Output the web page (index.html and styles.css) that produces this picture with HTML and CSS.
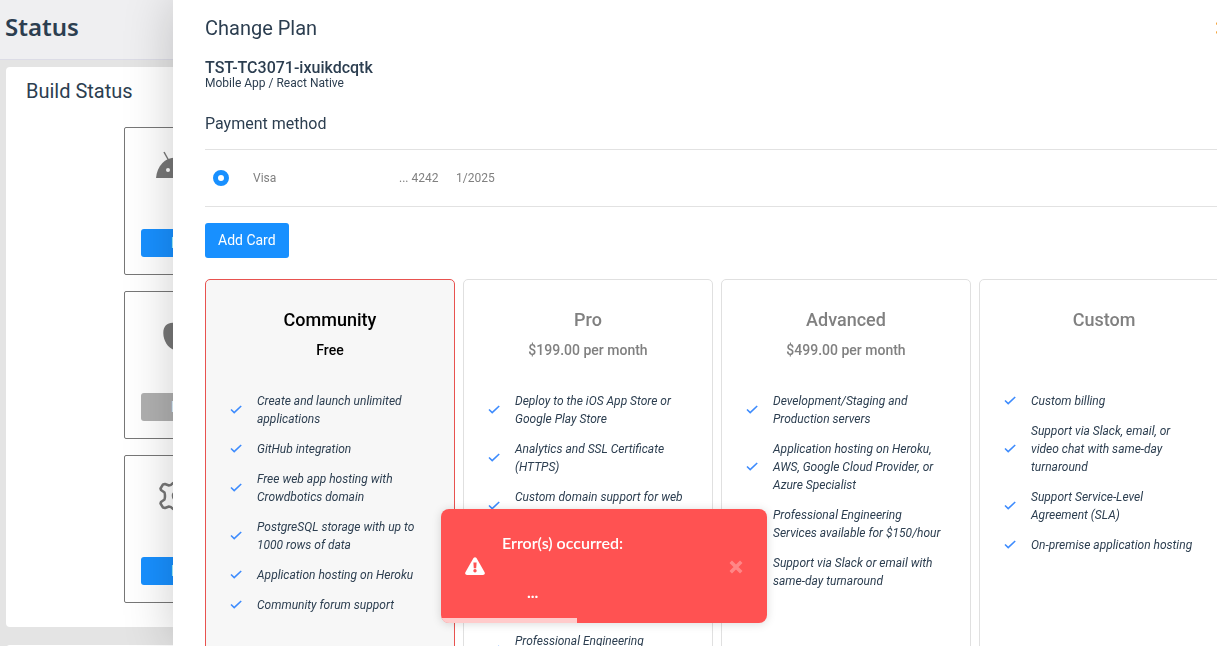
FILE: index.html
```html
<!DOCTYPE html>
<html lang="en">
<head>
<meta charset="utf-8">
<title>Status</title>
<link rel="stylesheet" href="styles.css">
</head>
<body>
<svg class="defs" aria-hidden="true">
  <symbol id="check" viewBox="0 0 12 12"><path d="M1 5.500 4.200 8.600 11.200 2" fill="none" stroke="#3d8bfd" stroke-width="1.600"/></symbol>
</svg>
<header class="page-header"><h1>Status</h1></header>
<main class="page">
  <section class="panel">
    <h2>Build Status</h2>
    <div class="builds">
      <article class="build">
        <svg class="build-icon" viewBox="0 0 40 40"><path d="M2 29C3 17 11 8.500 21.500 8.500S40 17 41 29Z" fill="#777"/><path d="m10 3 5 9" stroke="#777" stroke-width="1.500"/><circle cx="14" cy="21" r="2" fill="#fff"/><circle cx="29" cy="21" r="2" fill="#fff"/></svg>
        <button class="build-btn">Build</button>
      </article>
      <article class="build">
        <svg class="build-icon" viewBox="0 0 40 40"><path d="M9.300 20c0-7 4-10.300 9.200-10.300 2.500 0 3.500 1.300 5.500 1.300s4-1 7-1c3 0 5 2 6 4-5 4-5 10 1 14-3 7-6 9-8 9-3 0-4-1-6-1s-3 .6-5 .4C14.500 35 9.300 28 9.300 20Z" fill="#777"/></svg>
        <button class="build-btn muted">Build</button>
      </article>
      <article class="build">
        <svg class="build-icon" viewBox="0 0 40 40" fill="none" stroke="#777" stroke-width="2.500" stroke-linejoin="round"><path d="M19 6q-2 2.500-4 2.500L11 7 9 7.500 6.500 11.500 7 13l3.500 2.500q1 3.500 0 7L7 25l-.5 1.500L9 30.500l2 .5 4-1.500q2 0 4 2.500h6q2-2.500 4-2.500l4 1.500 2-.5 2.500-4L37 25l-3.500-2.500q-1-3.500 0-7L37 13l.5-1.500L35 7.500 33 7l-4 1.500Q27 8.500 25 6Z"/><circle cx="24" cy="19" r="5"/></svg>
        <button class="build-btn">Build</button>
      </article>
    </div>
  </section>
  <section class="panel next"></section>
</main>

<aside class="drawer">
  <header class="drawer-head">
    <h2>Change Plan</h2>
    <button class="drawer-close" aria-label="Close"><svg viewBox="0 0 13 12"><path d="m0 1 12 10M0 11 12 1" stroke="#f5a742" stroke-width="2"/></svg></button>
  </header>
  <h3 class="app-name">TST-TC3071-ixuikdcqtk</h3>
  <p class="app-type">Mobile App / React Native</p>
  <h4 class="pay-title">Payment method</h4>
  <table class="cards">
    <tbody><tr>
      <td class="pick"><input type="radio" name="card" id="visa" checked></td>
      <td class="brand"><label for="visa">Visa</label></td>
      <td class="digits">... 4242</td>
      <td>1/2025</td>
    </tr></tbody>
  </table>
  <button class="add-card">Add Card</button>
  <div class="plans">
    <article class="plan current">
      <h3>Community</h3><p class="price">Free</p>
      <ul>
        <li><svg><use href="#check"/></svg><span>Create and launch unlimited applications</span></li>
        <li><svg><use href="#check"/></svg><span>GitHub integration</span></li>
        <li><svg><use href="#check"/></svg><span>Free web app hosting with Crowdbotics domain</span></li>
        <li><svg><use href="#check"/></svg><span>PostgreSQL storage with up to 1000 rows of data</span></li>
        <li><svg><use href="#check"/></svg><span>Application hosting on Heroku</span></li>
        <li><svg><use href="#check"/></svg><span>Community forum support</span></li>
      </ul>
    </article>
    <article class="plan">
      <h3>Pro</h3><p class="price">$199.00 per month</p>
      <ul>
        <li><svg><use href="#check"/></svg><span>Deploy to the iOS App Store or Google Play Store</span></li>
        <li><svg><use href="#check"/></svg><span>Analytics and SSL Certificate (HTTPS)</span></li>
        <li class="tall"><svg><use href="#check"/></svg><span>Custom domain support for web</span></li>
        <li class="tall"></li>
        <li class="tall"></li>
        <li class="tall"><svg><use href="#check"/></svg><span>Professional Engineering</span></li>
      </ul>
    </article>
    <article class="plan">
      <h3>Advanced</h3><p class="price">$499.00 per month</p>
      <ul>
        <li><svg><use href="#check"/></svg><span>Development/Staging and Production servers</span></li>
        <li><svg><use href="#check"/></svg><span>Application hosting on Heroku, AWS, Google Cloud Provider, or Azure Specialist</span></li>
        <li><svg><use href="#check"/></svg><span>Professional Engineering Services available for $150/hour</span></li>
        <li><svg><use href="#check"/></svg><span>Support via Slack or email with same-day turnaround</span></li>
      </ul>
    </article>
    <article class="plan">
      <h3>Custom</h3><p class="price"></p>
      <ul>
        <li><svg><use href="#check"/></svg><span>Custom billing</span></li>
        <li><svg><use href="#check"/></svg><span>Support via Slack, email, or video chat with same-day turnaround</span></li>
        <li><svg><use href="#check"/></svg><span>Support Service-Level Agreement (SLA)</span></li>
        <li><svg><use href="#check"/></svg><span>On-premise application hosting</span></li>
      </ul>
    </article>
  </div>
</aside>

<div class="toast" role="alert">
  <svg class="warn" viewBox="0 0 20 18"><path d="M8.500 1Q10-.6 11.500 1l8.100 14.200Q20.300 18 18 18H2Q-.3 18 .4 15.200Z" fill="#fff"/><path d="M8.400 5.500h3.200l-.4 5.700H8.800Z" fill="#ff5252"/><circle cx="10" cy="13.800" r="1.700" fill="#ff5252"/></svg>
  <div class="toast-body"><p>Error(s) occurred:</p><p class="detail">...</p></div>
  <button class="toast-close" aria-label="Dismiss"><svg viewBox="0 0 12 12"><path d="m1.500 1.500 9 9m0-9-9 9" stroke="#fff" stroke-width="3"/></svg></button>
  <div class="progress"></div>
</div>
</body>
</html>
```
FILE: styles.css
```css
* { box-sizing: border-box; }
html, body { height: 100%; }
body {
  display: flex;
  flex-direction: column;
  margin: 0;
  overflow: hidden;
  background: #e4e4e4;
  color: #2c3e50;
  font-family: Roboto, sans-serif;
}
h1, h2, h3, h4, p, ul { margin: 0; padding: 0; }
button { border: 0; padding: 0; cursor: pointer; font-family: inherit; }
svg { display: block; }
.defs { position: absolute; width: 0; height: 0; }

.page-header {
  flex: none;
  height: 60px;
  padding: 10px 5px;
  background: #efeff1;
  border-bottom: 1px solid #dcdce6;
}
.page-header h1 {
  font: 600 24px/34px "Noto Sans", sans-serif;
}
.page { flex: 1; min-height: 0; padding: 7px 6px 0; overflow: hidden; }
.panel {
  padding: 12px 20px 24px;
  background: #fff;
  border-radius: 4px;
}
.panel h2, .drawer-head h2 { font-size: 20px; font-weight: 400; line-height: 24px; }
.panel.next { margin-top: 18px; }
.builds { display: grid; gap: 16px; padding: 24px 98px 0; }
.build {
  display: flex;
  flex-direction: column;
  justify-content: space-between;
  height: 148px;
  padding: 21px 16px 17px;
  border: 1px solid #777;
  border-radius: 2px;
}
.build-icon { width: 40px; height: 40px; margin-left: 13px; }
.build-btn {
  height: 28px;
  padding-left: 30px;
  border-radius: 3px;
  background: #1890ff;
  color: #fff;
  font-size: 14px;
  text-align: left;
}
.build-btn.muted { background: #b0b0b0; }

.drawer {
  position: fixed;
  top: 0;
  bottom: 0;
  left: 173px;
  right: -44px;
  padding: 16px 32px 0;
  overflow: hidden;
  background: #fff;
  box-shadow: 0 0 48px rgba(0, 0, 0, .2);
}
.drawer-head { display: flex; justify-content: space-between; align-items: center; }
.drawer-close { background: none; }
.drawer-close svg { width: 13px; height: 12px; }
.app-name { margin-top: 18px; font-size: 16px; font-weight: 500; line-height: 19px; }
.app-type { font-size: 12px; line-height: 13px; }
.pay-title { margin-top: 24px; font-size: 16px; font-weight: 400; line-height: 20px; }
.cards {
  width: 100%;
  margin-top: 15px;
  border-top: 1px solid #e2e2e2;
  border-bottom: 1px solid #e2e2e2;
  border-collapse: separate;
  border-spacing: 0;
  color: #808080;
  font-size: 12px;
}
.cards td { height: 56px; padding: 0; }
.cards .pick { width: 48px; padding-left: 8px; }
.cards .brand { width: 146px; }
.cards .digits { width: 57px; }
.pick input {
  display: block;
  appearance: none;
  width: 16px;
  height: 16px;
  margin: 0;
  border: 5px solid #1890ff;
  border-radius: 50%;
  background: #fff;
}
.add-card {
  display: block;
  height: 35px;
  margin: 16px 0 21px;
  padding: 0 13px 1px;
  border-radius: 3px;
  background: #1890ff;
  color: #fff;
  font-size: 14px;
}
.plans { display: grid; grid-template-columns: repeat(4, 1fr); gap: 8px; }
.plan {
  min-height: 420px;
  padding: 28px 24px 24px;
  border: 1px solid #e0e0e0;
  border-radius: 5px;
}
.plan.current { background: #f7f7f7; border-color: #e8524f; }
.plan h3, .price { color: #808080; font-weight: 500; text-align: center; }
.plan h3 { font-size: 18px; line-height: 24px; }
.price { min-height: 20px; margin-top: 8px; font-size: 14px; line-height: 20px; }
.current h3, .current .price { color: #000; }
.plan ul { display: grid; gap: 12px; margin-top: 32px; padding-right: 4px; list-style: none; }
.plan li {
  display: flex;
  align-items: center;
  gap: 15px;
  font-size: 12px;
  font-style: italic;
  line-height: 18px;
}
.plan li svg { flex: none; width: 12px; height: 12px; }
.plan .tall { min-height: 36px; }
.plan .tall span { align-self: flex-start; }

.toast {
  position: fixed;
  bottom: 23px;
  left: 441px;
  display: flex;
  align-items: center;
  width: 326px;
  padding: 22px 24px 19px;
  overflow: hidden;
  border-radius: 8px;
  background: #ff5252;
  box-shadow: 0 1px 10px rgba(0, 0, 0, .15);
  color: #fff;
  font: 600 16px/24px Lato, sans-serif;
}
.warn { width: 20px; height: 18px; margin: 0 17px 4px 0; }
.toast-body { flex: 1; }
.detail { margin-top: 25px; padding-left: 25px; font-weight: 700; }
.toast-close { margin-bottom: 2px; background: none; opacity: .3; }
.toast-close svg { width: 14px; height: 14px; }
.progress {
  position: absolute;
  bottom: 0;
  left: 0;
  width: 136px;
  height: 5px;
  background: rgba(255, 255, 255, .7);
}
```
